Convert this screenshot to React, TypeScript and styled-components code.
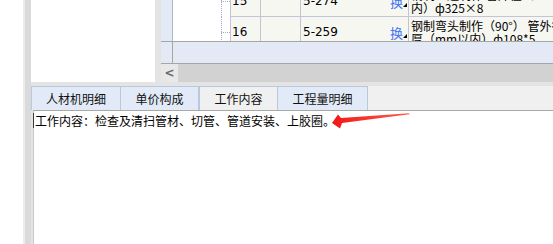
import styled, { createGlobalStyle } from 'styled-components';

const GlobalStyle = createGlobalStyle`
  html, body { margin: 0; padding: 0; background: #fff; }
  body { font-family: "Noto Sans CJK SC", "Noto Sans", sans-serif; font-size: 12px; color: #000; }
`;

type Row = { no: string; code: string; lines: string[] };

const rows: Row[] = [
  { no: '15', code: '5-274', lines: ['钢制三通制作 管外径（mm以', '内）ф325×8'] },
  { no: '16', code: '5-259', lines: ['钢制弯头制作（90°） 管外径×壁', '厚（mm以内）ф108*5'] },
];

const tabs = ['人材机明细', '单价构成', '工作内容', '工程量明细'];
const tabWidths = [90, 78, 79, 90];

const Page = styled.div`
  position: relative;
  width: 553px;
  height: 244px;
  display: flex;
  overflow: hidden;
  background: #fff;
`;

const Gutter = styled.div`
  width: 23px;
  flex-shrink: 0;
  background: #fff;
`;

const Splitter = styled.div`
  width: 8px;
  flex-shrink: 0;
  background: linear-gradient(to right, #ececec 0 2px, #dadada 2px 8px);
`;

const Main = styled.div`
  flex: 1;
  min-width: 0;
  display: flex;
  flex-direction: column;
  background: #e4e4e4;
`;

const Top = styled.div`
  height: 82px;
  display: flex;
  gap: 6px;
  flex-shrink: 0;
`;

const TreePanel = styled.div`
  width: 124px;
  background: #fff;
`;

const GridPanel = styled.div`
  flex: 1;
  min-width: 0;
  display: flex;
  flex-direction: column;
  overflow: hidden;
  background: #fff;
`;

const Viewport = styled.div`
  height: 41px;
  overflow: hidden;
`;

const Rows = styled.div`
  margin-top: -14px;
`;

const GridRow = styled.div`
  display: flex;
  height: 31px;
  white-space: nowrap;
`;

const Cell = styled.div<{ $w: number; $bg?: string; $line?: boolean }>`
  position: relative;
  box-sizing: border-box;
  width: ${p => p.$w}px;
  flex-shrink: 0;
  height: 100%;
  background: ${p => p.$bg ?? '#f7f7f1'};
  border-right: 1px solid #c4c4d8;
  border-bottom: ${p => (p.$line === false ? 'none' : '1px solid #c4c4d8')};
  display: flex;
  align-items: center;
  overflow: hidden;
  line-height: 13px;
`;

const HeadCell = styled(Cell)`
  border-right-color: #b0b8c8;
  border-bottom: none;
`;

const TreeCell = styled(Cell)`
  &::before {
    content: '';
    position: absolute;
    left: 48px;
    top: 0;
    bottom: 0;
    border-left: 1px dotted #a8a8c8;
  }
  &::after {
    content: '';
    position: absolute;
    left: 48px;
    width: 9px;
    top: 15px;
    border-top: 1px dotted #a8a8c8;
  }
`;

const NoText = styled.span`
  padding-left: 1px;
  font-family: "DejaVu Sans", sans-serif;
  font-size: 12px;
`;

const CodeCell = styled(Cell)`
  justify-content: space-between;
  padding: 0 5px 0 2px;
  font-family: "DejaVu Sans", sans-serif;
`;

const Swap = styled.span`
  position: relative;
  color: #3f72f2;
  font-family: "Noto Sans CJK SC", sans-serif;
  font-size: 13px;
  &::after {
    content: '';
    position: absolute;
    right: -4px;
    bottom: 1px;
    border-left: 4px solid transparent;
    border-bottom: 4px solid #000;
  }
`;

const DescCell = styled(Cell)`
  flex-direction: column;
  align-items: flex-start;
  justify-content: center;
  padding-left: 2px;
  border-right: none;
`;

const Footer = styled.div`
  height: 21px;
  display: flex;
  background: #e3e9f5;
  border-top: 1px solid #a6a6a6;
  border-bottom: 1px solid #a6a6a6;
`;

const FooterHead = styled.div`
  width: 11px;
  border-right: 1px solid #a6a6a6;
`;

const ScrollBar = styled.div`
  height: 18px;
  display: flex;
  background: #d2d2d2;
`;

const ScrollBtn = styled.div`
  width: 17px;
  height: 100%;
  background: #e8e8e8;
  display: flex;
  align-items: center;
  justify-content: center;
  color: #6c6c6c;
  font-family: "DejaVu Sans", sans-serif;
  font-weight: bold;
  font-size: 12px;
`;

const TabBar = styled.div`
  margin-top: 4px;
  height: 24px;
  display: flex;
  background: #f0f0f0;
  flex-shrink: 0;
`;

const Tab = styled.div<{ $active?: boolean; $w: number }>`
  box-sizing: border-box;
  width: ${p => p.$w}px;
  height: 100%;
  display: flex;
  align-items: center;
  justify-content: center;
  background: ${p => (p.$active ? '#f0f0f0' : '#e1eaf6')};
  border: 1px solid #b8c8de;
  border-bottom: none;
  border-left-width: ${p => (p.$active ? '1px' : '0')};
  &:first-child { border-left-width: 1px; }
  font-size: 12px;
  color: #111;
`;

const Content = styled.div`
  flex: 1;
  margin-left: 2px;
  background: #fff;
  border-top: 1px solid #a8a8a8;
  border-left: 1px solid #c8c8c8;
  padding: 2px 0 0 1px;
  font-size: 12px;
  line-height: 15px;
`;

const ContentLine = styled.div`
  margin-left: -2px;
  padding-left: 1px;
  border-left: 1px solid #3a3a3a;
`;

const Arrow = styled.svg`
  position: absolute;
  left: 325px;
  top: 100px;
  width: 90px;
  height: 35px;
`;

export default function App() {
  return (
    <>
      <GlobalStyle />
      <Page>
        <Gutter />
        <Splitter />
        <Main>
          <Top>
            <TreePanel />
            <GridPanel>
              <Viewport>
                <Rows>
                  {rows.map(r => (
                    <GridRow key={r.no}>
                      <HeadCell $w={12} $bg="#e3e9f5" />
                      <TreeCell $w={58} $bg="#fff" $line={false} />
                      <Cell $w={30}>
                        <NoText>{r.no}</NoText>
                      </Cell>
                      <Cell $w={40} />
                      <CodeCell $w={108}>
                        <span>{r.code}</span>
                        <Swap>换</Swap>
                      </CodeCell>
                      <DescCell $w={200}>
                        {r.lines.map(l => (
                          <span key={l}>{l}</span>
                        ))}
                      </DescCell>
                    </GridRow>
                  ))}
                </Rows>
              </Viewport>
              <Footer>
                <FooterHead />
              </Footer>
              <ScrollBar>
                <ScrollBtn>&lt;</ScrollBtn>
              </ScrollBar>
            </GridPanel>
          </Top>
          <TabBar>
            {tabs.map((t, i) => (
              <Tab key={t} $w={tabWidths[i]} $active={i === 2}>
                {t}
              </Tab>
            ))}
          </TabBar>
          <Content>
            <ContentLine>工作内容：检查及清扫管材、切管、管道安装、上胶圈。</ContentLine>
          </Content>
        </Main>
        <Arrow viewBox="0 0 90 35">
          <defs>
            <linearGradient id="ar" x1="0" x2="1" y1="0" y2="0">
              <stop offset="0" stopColor="#f01818" />
              <stop offset="1" stopColor="#ff5a4a" />
            </linearGradient>
          </defs>
          <polygon
            points="7,23 13,14.5 16,18 84,13.2 84.5,14.2 17,23 15,28.5"
            fill="url(#ar)"
          />
        </Arrow>
      </Page>
    </>
  );
}
